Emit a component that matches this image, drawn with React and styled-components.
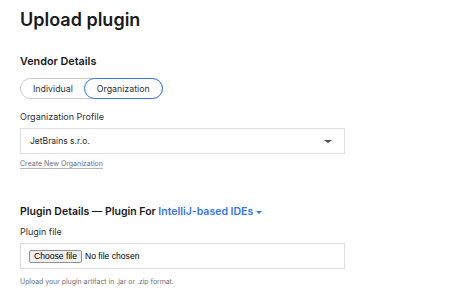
import React from "react";
import styled, { createGlobalStyle } from "styled-components";

const GlobalStyle = createGlobalStyle`
  html, body {
    margin: 0;
    background: #fff;
  }
  body {
    font-family: Inter, "Noto Sans", sans-serif;
    color: #1f1f1f;
  }
`;

const Page = styled.div`
  padding: 8px 20px;
  display: flex;
  flex-direction: column;
`;

const Title = styled.h1`
  margin: 0;
  font-size: 18px;
  line-height: 24px;
  font-weight: 600;
  color: #19191c;
`;

const SectionTitle = styled.h2`
  margin: ${(p) => p.$top}px 0 0;
  font-size: ${(p) => p.$size || 10.8}px;
  line-height: 16px;
  font-weight: 600;
  color: #19191c;
`;

const Accent = styled.span`
  color: #3574f0;
  display: inline-flex;
  align-items: center;
  gap: 3px;
`;

const Segmented = styled.div`
  margin-top: 8px;
  display: flex;
  width: max-content;
  border: 1px solid #c9c9cc;
  border-radius: 11px;
  height: 19px;
`;

const Segment = styled.button`
  all: unset;
  box-sizing: border-box;
  height: 21px;
  margin: -1px;
  padding: 0 ${(p) => p.$pad}px;
  display: flex;
  align-items: center;
  border-radius: 11px;
  border: 1px solid ${(p) => (p.$active ? "#3574f0" : "transparent")};
  font-size: 8.8px;
  color: #303033;
`;

const Label = styled.div`
  margin-top: ${(p) => p.$top}px;
  font-size: 9px;
  line-height: 14px;
  color: #303033;
`;

const Field = styled.div`
  box-sizing: border-box;
  margin-top: 4px;
  width: 325px;
  height: 26px;
  border: 1px solid #dfdfe2;
  display: flex;
  align-items: center;
  padding: 0 ${(p) => p.$pad}px;
  justify-content: space-between;
  font-size: 8.5px;
  color: #27282c;
`;

const Caret = styled.span`
  width: 0;
  height: 0;
  border-left: ${(p) => p.$size}px solid transparent;
  border-right: ${(p) => p.$size}px solid transparent;
  border-top: ${(p) => p.$size - 0.5}px solid ${(p) => p.$color};
  margin-right: ${(p) => p.$right || 0}px;
`;

const Link = styled.a`
  margin-top: 4px;
  font-size: 7px;
  line-height: 12px;
  color: #6c707e;
  text-decoration: underline;
  text-decoration-color: #b5b7bd;
  text-underline-offset: 2px;
  width: max-content;
`;

const FileRow = styled.div`
  display: flex;
  align-items: center;
  gap: 3px;
  font-family: "Liberation Sans", Arial, sans-serif;
  font-size: 8.6px;
  color: #000;
`;

const FileButton = styled.button`
  font-family: "Liberation Sans", Arial, sans-serif;
  font-size: 8.6px;
  color: #000;
  height: 13px;
  padding: 0 4px;
  background: #efefef;
  border: 1px solid #8f8f8f;
  border-radius: 2px;
  line-height: 11px;
`;

const Hint = styled.div`
  margin-top: 7px;
  font-size: 6.9px;
  line-height: 12px;
  color: #6c707e;
`;

export default function App() {
  return (
    <>
      <GlobalStyle />
      <Page>
        <Title>Upload plugin</Title>

        <SectionTitle $top={22}>Vendor Details</SectionTitle>
        <Segmented>
          <Segment $pad={12}>Individual</Segment>
          <Segment $pad={12} $active>
            Organization
          </Segment>
        </Segmented>

        <Label $top={11}>Organization Profile</Label>
        <Field $pad={9}>
          <span>JetBrains s.r.o.</span>
          <Caret $size={4} $color="#4a4b4f" $right={3} />
        </Field>
        <Link>Create New Organization</Link>

        <SectionTitle $top={34} $size={10.5}>
          Plugin Details — Plugin For{" "}
          <Accent>
            IntelliJ-based IDEs
            <Caret $size={3.5} $color="#3574f0" />
          </Accent>
        </SectionTitle>

        <Label $top={5}>Plugin file</Label>
        <Field $pad={8}>
          <FileRow>
            <FileButton>Choose file</FileButton>
            <span>No file chosen</span>
          </FileRow>
        </Field>
        <Hint>Upload your plugin artifact in .jar or .zip format.</Hint>
      </Page>
    </>
  );
}
